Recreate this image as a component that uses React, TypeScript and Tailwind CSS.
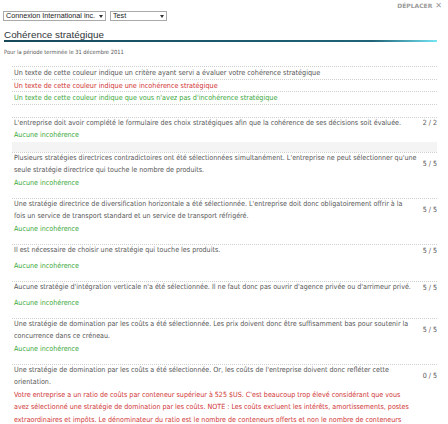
type Row = {
  desc: string[];
  status: string[];
  ok: boolean;
  score: string;
};

const legend = [
  { text: 'Un texte de cette couleur indique un critère ayant servi a évaluer votre cohérence stratégique', color: 'text-[#555555]' },
  { text: 'Un texte de cette couleur indique une incohérence stratégique', color: 'text-[#d03434]' },
  { text: "Un texte de cette couleur indique que vous n'avez pas d'incohérence stratégique", color: 'text-[#3aa83a]' },
];

const prerequisite: Row = {
  desc: ["L'entreprise doit avoir complété le formulaire des choix stratégiques afin que la cohérence de ses décisions soit évaluée."],
  status: ['Aucune incohérence'],
  ok: true,
  score: '2 / 2',
};

const rows: Row[] = [
  {
    desc: [
      "Plusieurs stratégies directrices contradictoires ont été sélectionnées simultanément. L'entreprise ne peut sélectionner qu'une",
      'seule stratégie directrice qui touche le nombre de produits.',
    ],
    status: ['Aucune incohérence'],
    ok: true,
    score: '5 / 5',
  },
  {
    desc: [
      "Une stratégie directrice de diversification horizontale a été sélectionnée. L'entreprise doit donc obligatoirement offrir à la",
      'fois un service de transport standard et un service de transport réfrigéré.',
    ],
    status: ['Aucune incohérence'],
    ok: true,
    score: '5 / 5',
  },
  {
    desc: ['Il est nécessaire de choisir une stratégie qui touche les produits.'],
    status: ['Aucune incohérence'],
    ok: true,
    score: '5 / 5',
  },
  {
    desc: ["Aucune stratégie d'intégration verticale n'a été sélectionnée. Il ne faut donc pas ouvrir d'agence privée ou d'arrimeur privé."],
    status: ['Aucune incohérence'],
    ok: true,
    score: '5 / 5',
  },
  {
    desc: [
      'Une stratégie de domination par les coûts a été sélectionnée. Les prix doivent donc être suffisamment bas pour soutenir la',
      'concurrence dans ce créneau.',
    ],
    status: ['Aucune incohérence'],
    ok: true,
    score: '5 / 5',
  },
  {
    desc: [
      "Une stratégie de domination par les coûts a été sélectionnée. Or, les coûts de l'entreprise doivent donc refléter cette",
      'orientation.',
    ],
    status: [
      "Votre entreprise a un ratio de coûts par conteneur supérieur à 525 $US. C'est beaucoup trop élevé considérant que vous",
      'avez sélectionné une stratégie de domination par les coûts. NOTE : Les coûts excluent les intérêts, amortissements, postes',
      'extraordinaires et impôts. Le dénominateur du ratio est le nombre de conteneurs offerts et non le nombre de conteneurs',
    ],
    ok: false,
    score: '0 / 5',
  },
];

function Select({ label, width }: { label: string; width: string }) {
  return (
    <div
      className={`${width} h-[10px] flex items-center justify-between border border-[#a9a9a9] bg-white pl-[2px] pr-[2px] font-['Liberation_Sans',sans-serif] text-[7.2px] leading-none whitespace-nowrap text-[#222]`}
    >
      <span>{label}</span>
      <svg width="4" height="3" viewBox="0 0 4 3" className="shrink-0">
        <path d="M0 0h4L2 3z" fill="#333" />
      </svg>
    </div>
  );
}

/* One criterion: description + score, then the verdict line(s) */
function Criterion({ row, minH }: { row: Row; minH: string }) {
  return (
    <div className="border-t border-dotted border-[#cfcfcf]">
      <div className="-mt-[1px] text-[7.1px] leading-[12.5px]">
        <div className={`flex items-center ${minH}`}>
          <div className="min-w-0 flex-1 self-start pl-[2px]">
            {row.desc.map((d) => (
              <div key={d} className="whitespace-nowrap">{d}</div>
            ))}
          </div>
          <div className="w-[26px] shrink-0 text-right whitespace-nowrap">{row.score}</div>
        </div>
        <div className={`pl-[2px] ${row.ok ? 'text-[#3aa83a]' : 'text-[#d03434]'}`}>
          {row.status.map((s) => (
            <div key={s} className="whitespace-nowrap">{s}</div>
          ))}
        </div>
      </div>
    </div>
  );
}

export default function App() {
  return (
    <div className="w-[448px] h-[424px] overflow-hidden bg-white font-['DejaVu_Sans_Condensed','DejaVu_Sans',sans-serif] text-[#555555]">
      {/* Top bar */}
      <div className="flex h-[9px] justify-end pr-[6px] pt-[2px] font-['DejaVu_Sans',sans-serif]">
        <span className="flex items-center gap-[3px] text-[6px] font-bold leading-[7px] text-[#9a9a9a]">
          DÉPLACER <span className="text-[8px] font-normal">✕</span>
        </span>
      </div>

      <div className="px-[3px]">
        {/* Selects */}
        <div className="mt-[2px] flex gap-[4px]">
          <Select label="Connexion International inc." width="w-[103px]" />
          <Select label="Test" width="w-[57px]" />
        </div>

        {/* Title */}
        <h1 className="mt-[8px] pl-[1px] font-['Liberation_Sans',sans-serif] text-[9.9px] leading-[11px] text-[#2f3638]">
          Cohérence stratégique
        </h1>
        <div className="ml-[1px] h-[2px] w-[433px] bg-linear-to-r from-[#17485a] via-[#1f6478] via-85% to-[#74e6f4]" />
        <p className="mt-[6px] pl-[1px] text-[5.7px] leading-[8px]">Pour la période terminée le 31 décembre 2011</p>
      </div>

      {/* Legend */}
      <div className="ml-[12px] mr-[11px] mt-[10px] border-t border-dotted border-[#cfcfcf]">
        {legend.map((l) => (
          <div key={l.text} className={`border-b border-dotted border-[#cfcfcf] pl-[2px] text-[7.2px] leading-[11.5px] ${l.color}`}>
            {l.text}
          </div>
        ))}
      </div>

      {/* Prerequisite */}
      <div className="ml-[12px] mr-[11px] mt-[12px]">
        <Criterion row={prerequisite} minH="" />
      </div>
      <div className="ml-[12px] mr-[11px] h-[10px] bg-[#f4f4f4]" />

      {/* Criteria */}
      <div className="ml-[12px] mr-[11px] flex flex-col">
        {rows.map((r, i) => (
          <div key={i} className="pb-[8.5px]">
            <Criterion row={r} minH="min-h-[16px]" />
          </div>
        ))}
      </div>
    </div>
  );
}
